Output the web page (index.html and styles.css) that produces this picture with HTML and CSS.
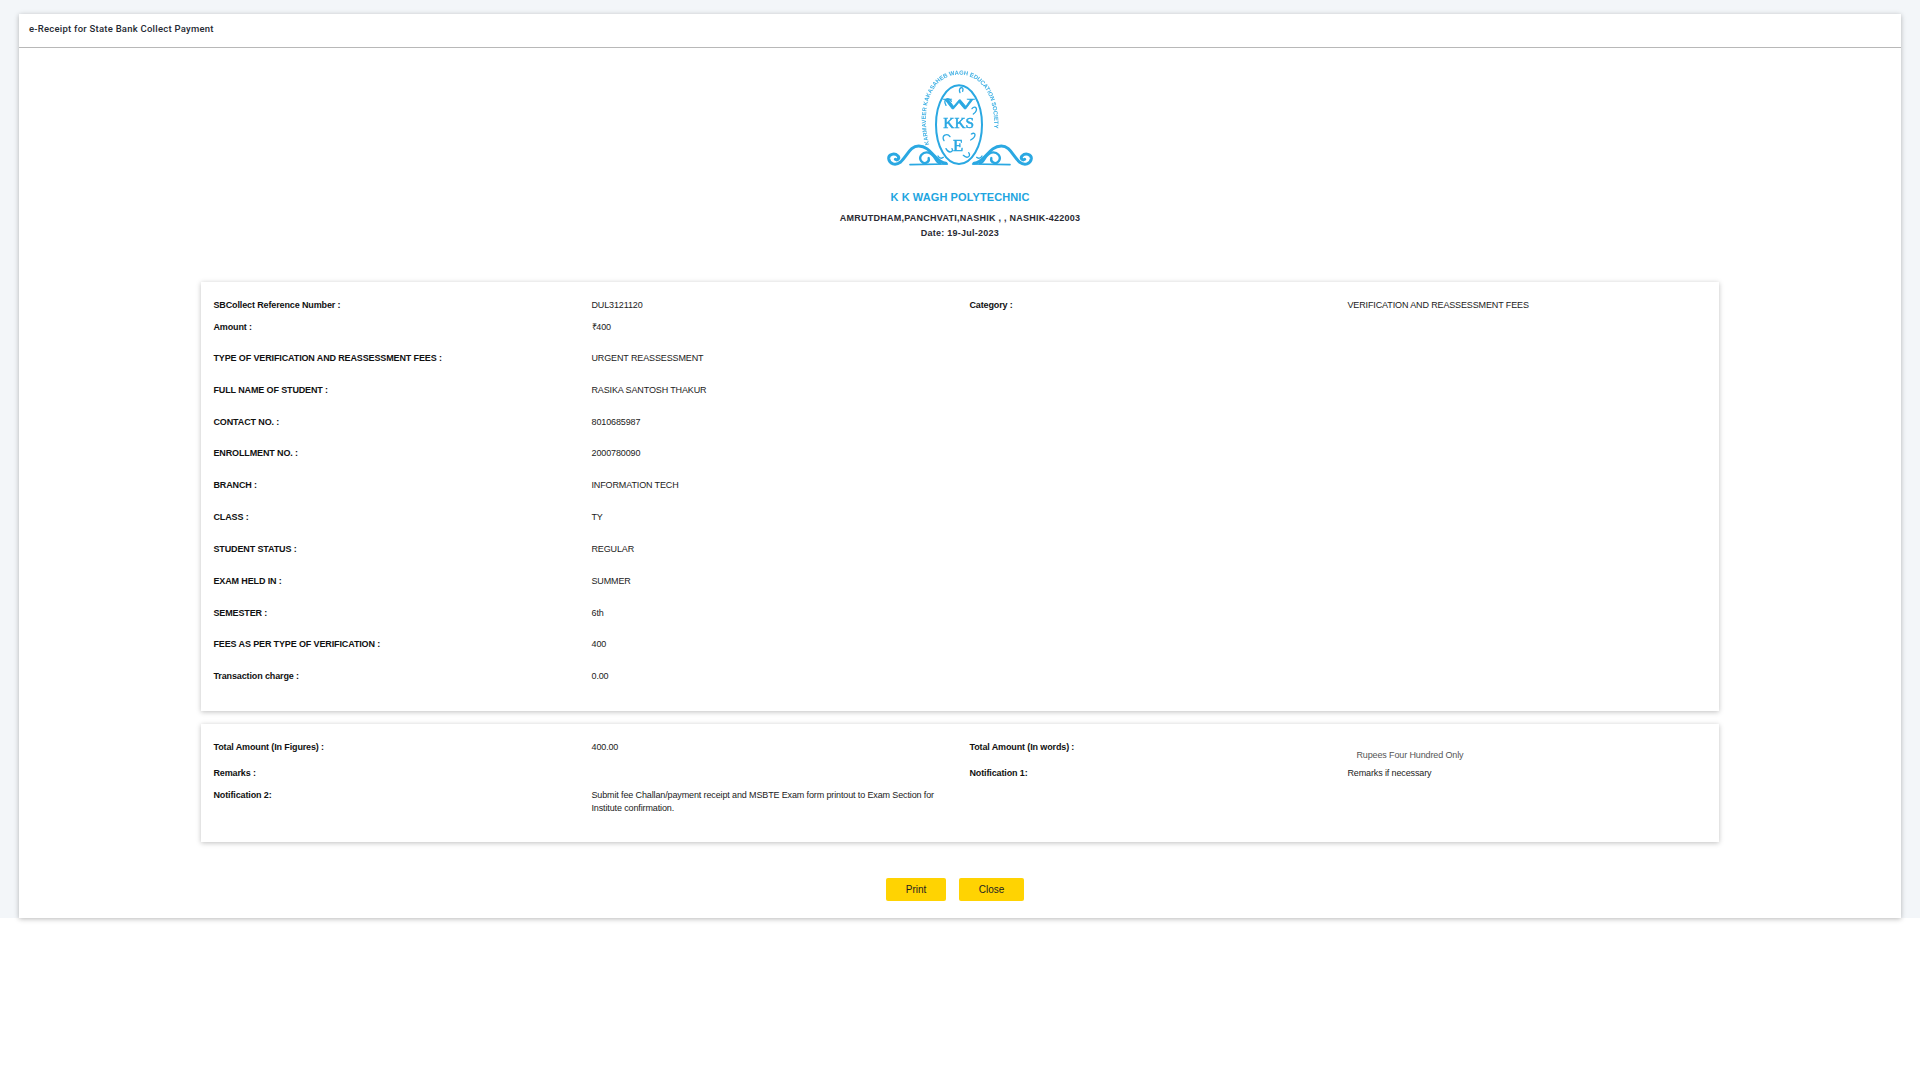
FILE: index.html
```html
<!DOCTYPE html>
<html lang="en">
<head>
<meta charset="utf-8">
<title>e-Receipt</title>
<link rel="stylesheet" href="styles.css">
</head>
<body>
<div class="page">
  <main class="panel">
    <header class="panel-head">e-Receipt for State Bank Collect Payment</header>
    <section class="brand">
      <svg class="logo" viewBox="0 0 600 390" width="200" height="130" aria-label="Karmaveer Kakasaheb Wagh Education Society logo">
        <defs>
          <path id="arc" d="M208 284 C176 160 222 74 298 74 C374 74 420 160 396 278"/>
          <g id="scroll" fill="none" stroke="#2aa8e2" stroke-linecap="round">
            <path stroke-width="9" d="M258 340 C226 338 214 288 176 288 C150 288 142 318 122 336 C106 348 88 342 86 326 C85 312 104 308 114 318 C120 326 112 332 106 328"/>
            <path stroke-width="7" d="M240 340 C226 338 226 314 206 308 C188 304 174 320 184 334 C192 344 210 338 206 324"/>
            <path stroke-width="5" d="M262 342 L150 344"/>
            <path stroke-width="4" d="M234 318 C238 326 246 326 250 322"/>
          </g>
        </defs>
        <use href="#scroll"/>
        <use href="#scroll" transform="translate(600 0) scale(-1 1)"/>
        <ellipse class="logo-oval" cx="297" cy="224" rx="69" ry="118"/>
        <text class="logo-ring"><textPath href="#arc" textLength="480" lengthAdjust="spacingAndGlyphs">KARMAVEER KAKASAHEB WAGH EDUCATION SOCIETY</textPath></text>
        <text class="logo-mark" x="297" y="178" font-size="46" textLength="94" lengthAdjust="spacingAndGlyphs">W</text>
        <text class="logo-mark" x="296" y="234" font-size="44" textLength="92" lengthAdjust="spacingAndGlyphs">KKS</text>
        <text class="logo-mark" x="294" y="304" font-size="50">E</text>
        <g class="logo-swirl">
          <path d="M258 166 C246 146 268 140 274 154"/>
          <path d="M340 192 C358 178 346 164 336 176"/>
          <path d="M252 272 C242 256 262 248 270 260"/>
          <path d="M300 128 C292 112 314 106 308 124"/>
          <path d="M332 270 C350 260 348 244 334 252"/>
          <path d="M258 296 C266 312 282 306 276 296"/>
          <path d="M310 316 C322 328 334 318 326 308"/>
        </g>
      </svg>
      <h1 class="college">K K WAGH POLYTECHNIC</h1>
      <p class="addr">AMRUTDHAM,PANCHVATI,NASHIK , , NASHIK-422003</p>
      <p class="addr">Date: 19-Jul-2023</p>
    </section>

    <section class="sheet sheet-main">
      <div class="row row-tight">
        <div class="label">SBCollect Reference Number :</div><div class="value">DUL3121120</div>
        <div class="label">Category :</div><div class="value">VERIFICATION AND REASSESSMENT FEES</div>
      </div>
      <div class="row row-second"><div class="label">Amount :</div><div class="value">₹400</div></div>
      <div class="row"><div class="label">TYPE OF VERIFICATION AND REASSESSMENT FEES :</div><div class="value">URGENT REASSESSMENT</div></div>
      <div class="row"><div class="label">FULL NAME OF STUDENT :</div><div class="value">RASIKA SANTOSH THAKUR</div></div>
      <div class="row"><div class="label">CONTACT NO. :</div><div class="value">8010685987</div></div>
      <div class="row"><div class="label">ENROLLMENT NO. :</div><div class="value">2000780090</div></div>
      <div class="row"><div class="label">BRANCH :</div><div class="value">INFORMATION TECH</div></div>
      <div class="row"><div class="label">CLASS :</div><div class="value">TY</div></div>
      <div class="row"><div class="label">STUDENT STATUS :</div><div class="value">REGULAR</div></div>
      <div class="row"><div class="label">EXAM HELD IN :</div><div class="value">SUMMER</div></div>
      <div class="row"><div class="label">SEMESTER :</div><div class="value">6th</div></div>
      <div class="row"><div class="label">FEES AS PER TYPE OF VERIFICATION :</div><div class="value">400</div></div>
      <div class="row"><div class="label">Transaction charge :</div><div class="value">0.00</div></div>
    </section>

    <section class="sheet sheet-total">
      <div class="row row-gap-s">
        <div class="label">Total Amount (In Figures) :</div><div class="value">400.00</div>
        <div class="label">Total Amount (In words) :</div><div class="value value-words">Rupees Four Hundred Only</div>
      </div>
      <div class="row row-tight">
        <div class="label">Remarks :</div><div class="value"></div>
        <div class="label">Notification 1:</div><div class="value">Remarks if necessary</div>
      </div>
      <div class="row">
        <div class="label">Notification 2:</div>
        <div class="value">Submit fee Challan/payment receipt and MSBTE Exam form printout to Exam Section for Institute confirmation.</div>
      </div>
    </section>

    <div class="actions">
      <button class="btn btn-print" type="button">Print</button>
      <button class="btn btn-close" type="button">Close</button>
    </div>
  </main>
</div>
</body>
</html>
```

FILE: styles.css
```css
* { box-sizing: border-box; }

html, body {
  margin: 0;
  padding: 0;
  background: #fff;
}

body {
  height: 1080px;
  overflow: hidden;
  font-family: "Liberation Sans", Arial, sans-serif;
  color: #111;
}

.page {
  background: #f3f6f9;
  padding: 14px 19px 0;
  height: 918px;
}

.panel {
  height: 904px;
  background: #fff;
  box-shadow: 0 1px 5px rgba(0, 0, 0, 0.28);
  display: flex;
  flex-direction: column;
}

.panel-head {
  height: 34px;
  padding: 0 10px 4px;
  border-bottom: 1px solid #b8b8b8;
  display: flex;
  align-items: center;
  font-family: Roboto, sans-serif;
  font-weight: 500;
  font-size: 9.5px;
  letter-spacing: 0.24px;
  color: #262a33;
}

.brand {
  display: flex;
  flex-direction: column;
  align-items: center;
  height: 234px;
  padding-top: 2px;
}

.logo {
  display: block;
  filter: blur(0.35px);
}

.logo-oval {
  fill: none;
  stroke: #2aa8e2;
  stroke-width: 6;
}

.logo-ring {
  fill: #3fb0e4;
  font-family: "Liberation Sans", Arial, sans-serif;
  font-size: 18px;
  font-weight: 700;
}

.logo-mark {
  fill: #2aa8e2;
  stroke: #2aa8e2;
  stroke-width: 1.5;
  font-family: "Liberation Serif", serif;
  text-anchor: middle;
}

.logo-swirl path {
  fill: none;
  stroke: #2aa8e2;
  stroke-width: 4;
  stroke-linecap: round;
}

.college {
  margin: 10px 0 8px;
  font-family: "Liberation Sans", Arial, sans-serif;
  font-size: 11px;
  line-height: 14px;
  font-weight: 700;
  letter-spacing: 0.1px;
  color: #1ea5e0;
}

.addr {
  margin: 0 0 3px;
  font-size: 9px;
  line-height: 12px;
  font-weight: 700;
  letter-spacing: 0.25px;
  color: #2a2a33;
}

.sheet {
  margin: 0 182px;
  padding: 17px 0 0 12.5px;
  background: #fff;
  box-shadow: 0 1px 5px rgba(0, 0, 0, 0.25);
}

.sheet-main { height: 429px; }

.sheet-total {
  height: 118px;
  margin-top: 13px;
}

.row {
  display: grid;
  grid-template-columns: repeat(4, 378px);
  margin-bottom: 19.84px;
  font-size: 9px;
  line-height: 12px;
  letter-spacing: -0.13px;
}

.row-tight { margin-bottom: 10px; }

.row-second { margin-bottom: 19px; }

.row-gap-s { margin-bottom: 6px; }

.label { font-weight: 700; color: #111; }

.value {
  padding-right: 20px;
  color: #222;
}

.sheet-total .row:last-child { line-height: 13px; }

.value-words {
  padding: 8px 0 0 9px;
  color: #555;
}

.actions {
  display: flex;
  justify-content: center;
  gap: 13px;
  margin-top: 36px;
  padding-right: 10px;
}

.btn {
  height: 23px;
  padding: 0;
  border: 0;
  border-radius: 2px;
  background: #ffd302;
  color: #222;
  font-family: "Liberation Sans", Arial, sans-serif;
  font-size: 10px;
}

.btn-print { width: 60px; }

.btn-close { width: 65px; }
```
